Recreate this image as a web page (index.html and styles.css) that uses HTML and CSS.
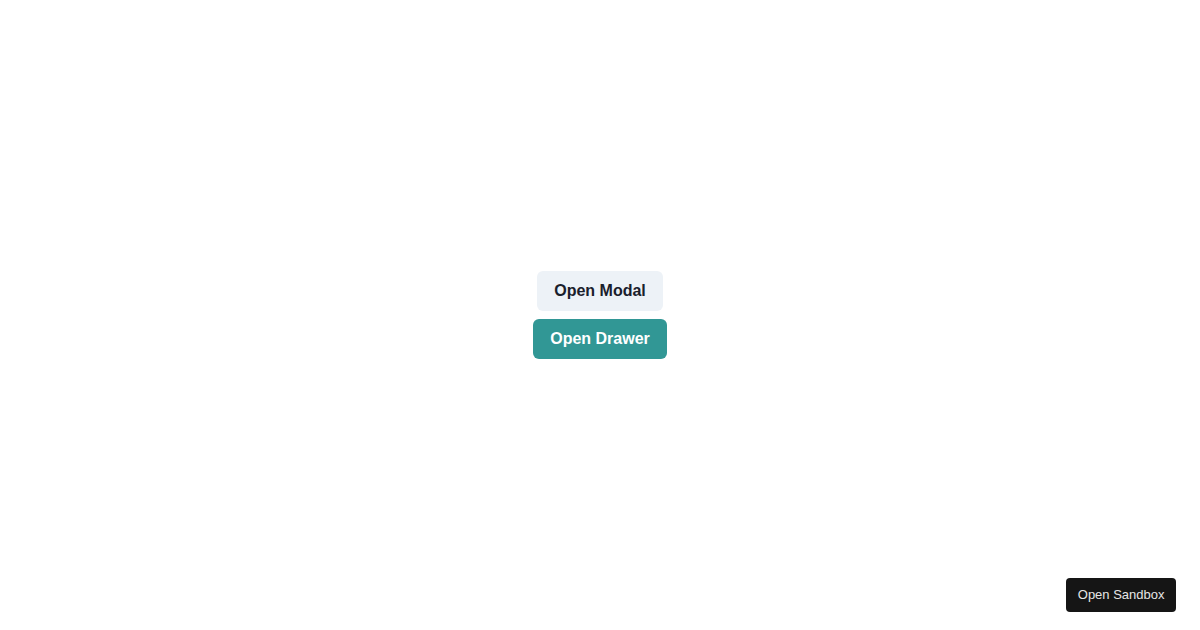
FILE: index.html
```html
<!DOCTYPE html>
<html>
<head>
<meta charset="utf-8">
<link rel="stylesheet" href="styles.css">
</head>
<body>
<main class="stage">
  <button class="btn btn-gray">Open Modal</button>
  <button class="btn btn-teal">Open Drawer</button>
</main>
<button class="sandbox">Open Sandbox</button>
</body>
</html>
```

FILE: styles.css
```css
html, body {
  margin: 0;
  padding: 0;
  background: #ffffff;
  font-family: "Liberation Sans", Arial, sans-serif;
}
.stage {
  height: 630px;
  display: flex;
  flex-direction: column;
  align-items: center;
  justify-content: center;
  gap: 8px;
}
.btn {
  height: 40px;
  padding: 0 17px;
  border: none;
  border-radius: 6px;
  font-family: "Liberation Sans", Arial, sans-serif;
  font-size: 16px;
  font-weight: 700;
  line-height: 1.2;
  cursor: pointer;
}
.btn-gray {
  background: #edf2f7;
  color: #1a202c;
}
.btn-teal {
  background: #319795;
  color: #ffffff;
}
.sandbox {
  position: fixed;
  right: 24px;
  bottom: 18px;
  height: 34px;
  padding: 0 11.5px 2px;
  border: none;
  border-radius: 4px;
  background: #151515;
  color: #e6e6e6;
  font-family: "Liberation Sans", Arial, sans-serif;
  font-size: 13px;
  cursor: pointer;
}
```
